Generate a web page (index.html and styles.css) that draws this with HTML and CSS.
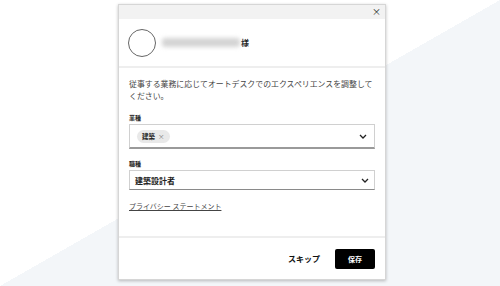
FILE: index.html
```html
<!DOCTYPE html>
<html lang="ja">
<head>
    <meta charset="UTF-8">
    <title>プロファイル</title>
    <link rel="stylesheet" href="styles.css">
</head>
<body>
    <div class="dialog">
        <div class="dialog-top">
            <span class="close">&times;</span>
        </div>

        <div class="profile">
            <div class="avatar"></div>
            <div class="name-blur"></div>
            <span class="honorific">様</span>
        </div>

        <div class="content">
            <p class="intro">従事する業務に応じてオートデスクでのエクスペリエンスを調整してください。</p>

            <div class="field">
                <div class="label">業種</div>
                <div class="select select-multi">
                    <span class="chip">建築 <span class="chip-x">&times;</span></span>
                    <svg class="chevron" width="8" height="5" viewBox="0 0 8 5"><path d="M1 1l3 3 3-3" fill="none" stroke="#222" stroke-width="1.3"/></svg>
                </div>
            </div>

            <div class="field">
                <div class="label">職種</div>
                <div class="select select-single">
                    <span class="value">建築設計者</span>
                    <svg class="chevron" width="8" height="5" viewBox="0 0 8 5"><path d="M1 1l3 3 3-3" fill="none" stroke="#222" stroke-width="1.3"/></svg>
                </div>
            </div>

            <a class="privacy" href="#">プライバシー ステートメント</a>
        </div>

        <div class="footer">
            <button class="btn-skip">スキップ</button>
            <button class="btn-save">保存</button>
        </div>
    </div>
</body>
</html>
```

FILE: styles.css
```css
html, body {
    height: 100%;
}
body {
    margin: 0;
    font-family: "Noto Sans CJK JP", "Noto Sans", sans-serif;
    color: #3c3c3c;
    background: linear-gradient(to bottom right, #ffffff 50%, #f3f6f9 50%);
    overflow: hidden;
}
.dialog {
    box-sizing: border-box;
    width: 268px;
    margin: 4px 0 0 118px;
    background: white;
    border: 1px solid #d6d6d6;
    box-shadow: 0 1px 3px rgba(0,0,0,0.25);
}
.dialog-top {
    height: 14px;
    background: #f2f2f2;
    display: flex;
    justify-content: flex-end;
    align-items: center;
    padding-right: 4px;
}
.close {
    font-size: 9px;
    line-height: 14px;
    color: #222;
}
.profile {
    height: 47px;
    display: flex;
    align-items: center;
    padding-left: 9px;
    border-bottom: 2px solid #eeeeee;
}
.avatar {
    width: 26px;
    height: 26px;
    border: 1px solid #666;
    border-radius: 50%;
    margin-right: 6px;
}
.name-blur {
    width: 78px;
    height: 9px;
    background: #d4d4d4;
    filter: blur(2px);
    border-radius: 3px;
}
.honorific {
    font-size: 8px;
    font-weight: bold;
    color: #222;
    margin-left: 1px;
}
.content {
    padding: 10px 10px 0 10px;
    height: 158px;
    border-bottom: 2px solid #eeeeee;
}
.intro {
    margin: 0;
    font-size: 7.9px;
    line-height: 12px;
    color: #444;
}
.field {
    margin-top: 12px;
}
.field + .field {
    margin-top: 11px;
}
.label {
    font-size: 6px;
    font-weight: bold;
    line-height: 8px;
    color: #222;
    margin-bottom: 2px;
}
.select {
    box-sizing: border-box;
    display: flex;
    align-items: center;
    justify-content: space-between;
    border: 1px solid #d0d0d0;
    background: white;
}
.select-multi {
    height: 25px;
    padding: 0 7px 0 7px;
    border-bottom: 2px solid #9a9a9a;
}
.select-single {
    height: 20px;
    padding: 0 5px 0 5px;
    border-bottom: 1px solid #8a8a8a;
}
.chip {
    display: inline-flex;
    align-items: center;
    height: 13px;
    padding: 0 5px;
    border-radius: 7px;
    background: #e9e9e9;
    font-size: 6.5px;
    font-weight: bold;
    color: #222;
}
.chip-x {
    font-weight: normal;
    color: #888;
    margin-left: 3px;
}
.value {
    font-size: 8px;
    font-weight: bold;
    color: #222;
}
.privacy {
    display: inline-block;
    margin-top: 11px;
    font-size: 7px;
    color: #444;
    text-decoration: underline;
}
.footer {
    height: 41px;
    display: flex;
    align-items: center;
    justify-content: flex-end;
    padding-right: 10px;
    gap: 15px;
}
.btn-skip {
    border: none;
    background: none;
    font-family: inherit;
    font-size: 8px;
    font-weight: bold;
    color: #111;
    padding: 0;
}
.btn-save {
    width: 40px;
    height: 20px;
    border: none;
    border-radius: 2px;
    background: #000;
    color: white;
    font-family: inherit;
    font-size: 7px;
    font-weight: bold;
    padding: 0;
}
```
